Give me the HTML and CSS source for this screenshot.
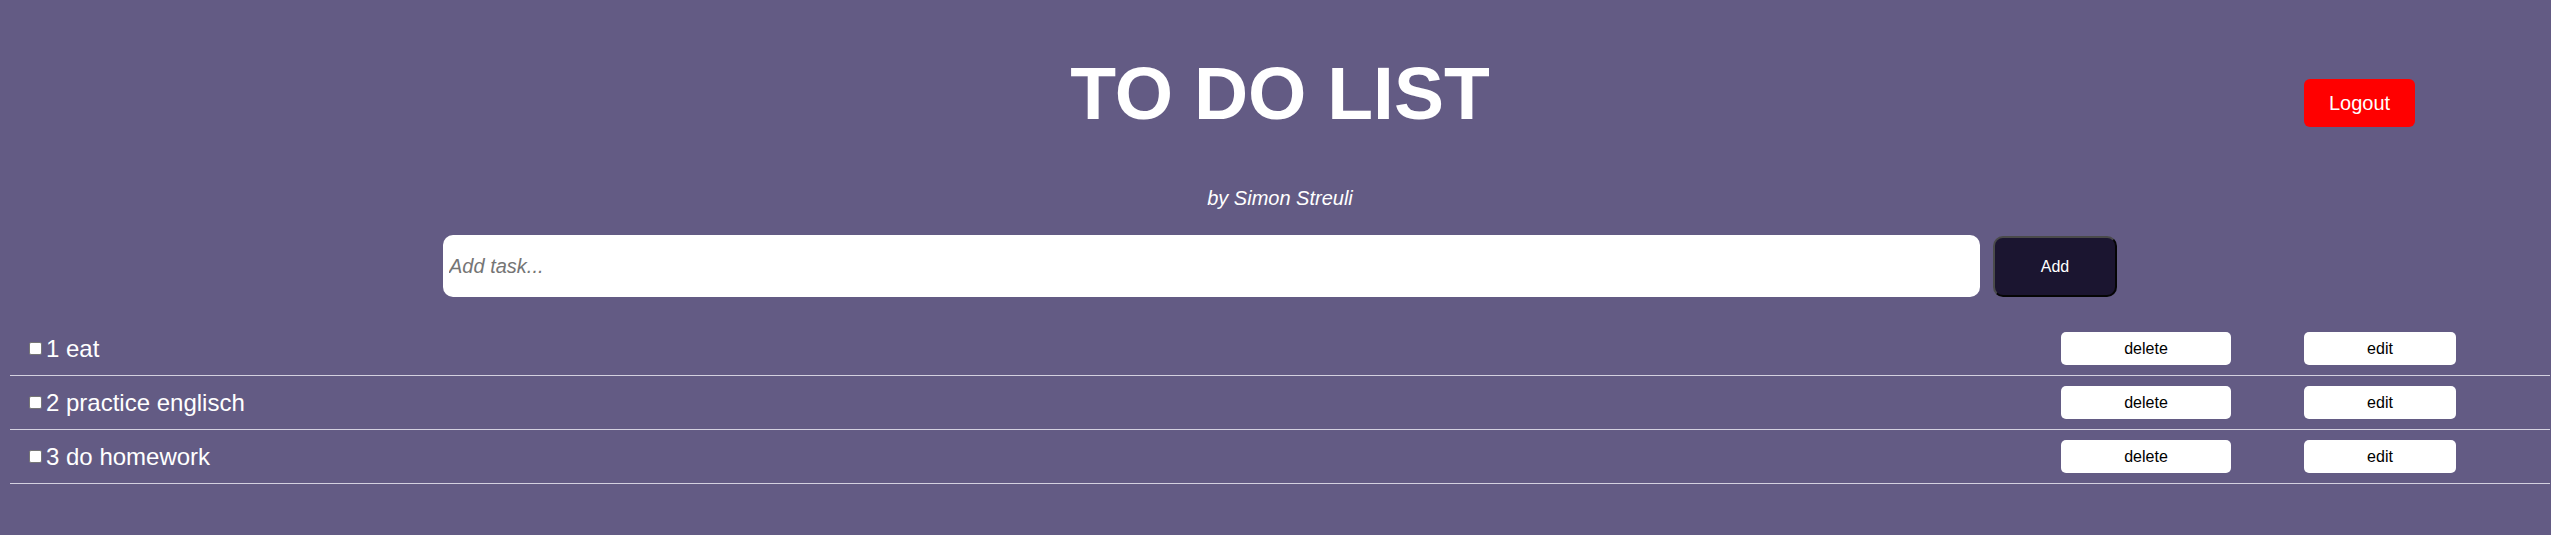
FILE: index.html
```html
<!DOCTYPE html>
<html lang="en">
<head>
<meta charset="utf-8">
<title>To Do List</title>
<link rel="stylesheet" href="styles.css">
</head>
<body>
<div class="page">
  <header class="header">
    <div class="spacer"></div>
    <h1 class="title">TO DO LIST</h1>
    <button class="logout">Logout</button>
  </header>
  <p class="byline">by Simon Streuli</p>
  <form class="add-form">
    <input class="task-input" type="text" placeholder="Add task...">
    <button class="add-btn" type="button">Add</button>
  </form>
  <ul class="tasks">
    <li class="task">
      <label class="task-label"><input type="checkbox" class="check">1 eat</label>
      <button class="small-btn">delete</button>
      <button class="small-btn">edit</button>
    </li>
    <li class="task">
      <label class="task-label"><input type="checkbox" class="check">2 practice englisch</label>
      <button class="small-btn">delete</button>
      <button class="small-btn">edit</button>
    </li>
    <li class="task">
      <label class="task-label"><input type="checkbox" class="check">3 do homework</label>
      <button class="small-btn">delete</button>
      <button class="small-btn">edit</button>
    </li>
  </ul>
</div>
</body>
</html>
```
FILE: styles.css
```css
html, body {
  margin: 0;
  padding: 0;
  background: #635b84;
  font-family: "Liberation Sans", Arial, sans-serif;
  color: #fff;
}

.page {
  padding: 0 1px 0 10px;
}

.header {
  display: grid;
  grid-template-columns: 1fr auto 1fr;
  padding-top: 50px;
}

.title {
  margin: 0;
  font-size: 75px;
  font-weight: bold;
  line-height: 87px;
  color: #fff;
}

.logout {
  justify-self: end;
  align-self: start;
  margin: 29px 135px 0 0;
  width: 111px;
  height: 48px;
  border: none;
  border-radius: 6px;
  background: #ff0000;
  color: #fff;
  font-family: "Liberation Sans", Arial, sans-serif;
  font-size: 20px;
  padding: 0;
}

.byline {
  margin: 50px 0 0;
  text-align: center;
  font-style: italic;
  font-size: 20px;
  line-height: 23px;
}

.add-form {
  display: flex;
  justify-content: center;
  align-items: flex-end;
  gap: 13px;
  margin: 25px 0 0;
}

.task-input {
  box-sizing: border-box;
  width: 1537px;
  height: 62px;
  border: none;
  border-radius: 10px;
  padding: 0 6px;
  font-family: "Liberation Sans", Arial, sans-serif;
  font-size: 20px;
  background: #fff;
  outline: none;
}

.task-input::placeholder {
  color: #757575;
  font-style: italic;
}

.add-btn {
  box-sizing: border-box;
  width: 124px;
  height: 61px;
  border: 2px solid;
  border-color: #4a4a4a #050505 #050505 #4a4a4a;
  border-radius: 10px;
  background: #1b1530;
  color: #fff;
  font-family: "Liberation Sans", Arial, sans-serif;
  font-size: 16px;
  padding: 0;
}

.tasks {
  list-style: none;
  margin: 25px 0 0;
  padding: 0;
}

.task {
  display: grid;
  grid-template-columns: 1fr 170px 152px;
  column-gap: 73px;
  align-items: center;
  padding: 10px 94px 10px 15px;
  border-bottom: 1px solid #d4d1e0;
}

.task-label {
  display: flex;
  align-items: center;
  font-size: 24px;
  color: #fff;
}

.check {
  appearance: none;
  -webkit-appearance: none;
  box-sizing: border-box;
  width: 13px;
  height: 13px;
  margin: 0 4px 0 4px;
  border: 1px solid #767676;
  border-radius: 2px;
  background: #fff;
  flex: none;
}

.small-btn {
  height: 33px;
  border: none;
  border-radius: 5px;
  background: #fff;
  color: #000;
  font-family: "Liberation Sans", Arial, sans-serif;
  font-size: 16px;
  padding: 0;
}
```
